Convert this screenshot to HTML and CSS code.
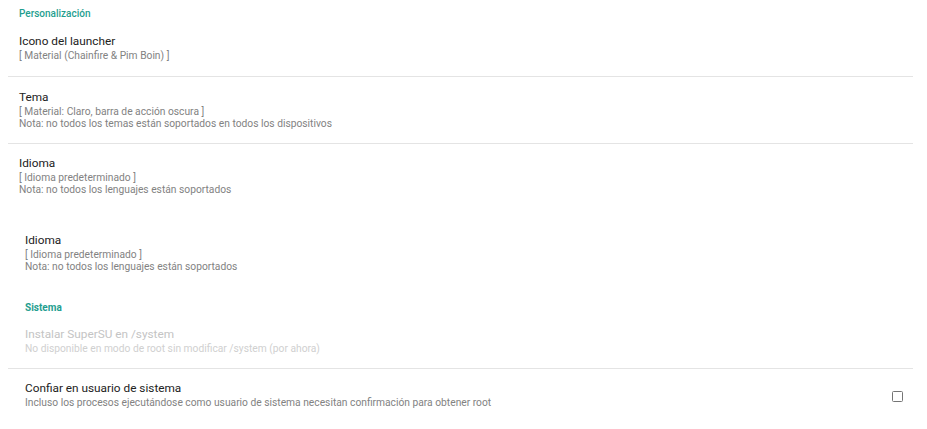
FILE: index.html
```html
<!DOCTYPE html>
<html lang="es">
<head>
  <meta charset="UTF-8">
  <meta name="viewport" content="width=device-width, initial-scale=1.0">
  <title>Ajustes</title>
  <link rel="stylesheet" href="styles.css">
</head>
<body>

<div class="prefs">
  <div class="category">Personalización</div>

  <div class="pref first">
    <div class="title">Icono del launcher</div>
    <div class="summary">[ Material (Chainfire &amp; Pim Boin) ]</div>
  </div>

  <div class="pref second">
    <div class="title">Tema</div>
    <div class="summary">[ Material: Claro, barra de acción oscura ]<br>Nota: no todos los temas están soportados en todos los dispositivos</div>
  </div>

  <div class="pref third no-line">
    <div class="title">Idioma</div>
    <div class="summary">[ Idioma predeterminado ]<br>Nota: no todos los lenguajes están soportados</div>
  </div>

  <div class="pref inset repeat no-line">
    <div class="title">Idioma</div>
    <div class="summary">[ Idioma predeterminado ]<br>Nota: no todos los lenguajes están soportados</div>
  </div>

  <div class="category inset system">Sistema</div>

  <div class="pref inset disabled">
    <div class="title">Instalar SuperSU en /system</div>
    <div class="summary">No disponible en modo de root sin modificar /system (por ahora)</div>
  </div>

  <div class="pref inset check-row no-line">
    <div class="text">
      <div class="title">Confiar en usuario de sistema</div>
      <div class="summary">Incluso los procesos ejecutándose como usuario de sistema necesitan confirmación para obtener root</div>
    </div>
    <span class="checkbox"></span>
  </div>
</div>

</body>
</html>
```

FILE: styles.css
```css
body {
  margin: 0;
  background: #fff;
  font-family: Roboto, "Noto Sans", sans-serif;
}
.prefs {
  margin: 0 14px 0 8px;
}
.category {
  padding: 8px 0 0 11px;
  font-size: 10px;
  line-height: 12px;
  font-weight: 500;
  color: #1f9e8f;
}
.category.system {
  padding-top: 17px;
  font-weight: 700;
}
.pref {
  padding: 12px 0 13px 11px;
  border-bottom: 1px solid #e4e4e4;
}
.pref.no-line {
  border-bottom: none;
}
.pref.first {
  padding-top: 13px;
  padding-bottom: 14px;
}
.pref.third {
  padding-top: 11px;
  padding-bottom: 13px;
}
.pref.repeat {
  padding-top: 23px;
  padding-bottom: 12px;
}
.inset {
  padding-left: 17px;
}
.title {
  font-size: 11.8px;
  line-height: 16px;
  color: #222;
}
.summary {
  margin-top: 1px;
  font-size: 10.25px;
  line-height: 12px;
  color: #828282;
}
.disabled .title {
  color: #c4c4c4;
}
.disabled .summary {
  color: #d0d0d0;
}
.check-row {
  display: flex;
  align-items: center;
  padding-top: 11px;
}
.check-row .text {
  flex: 1;
}
.checkbox {
  width: 9px;
  height: 9px;
  margin: 3px 10px 0 0;
  border: 1.5px solid #757575;
  border-radius: 1.5px;
}
```
